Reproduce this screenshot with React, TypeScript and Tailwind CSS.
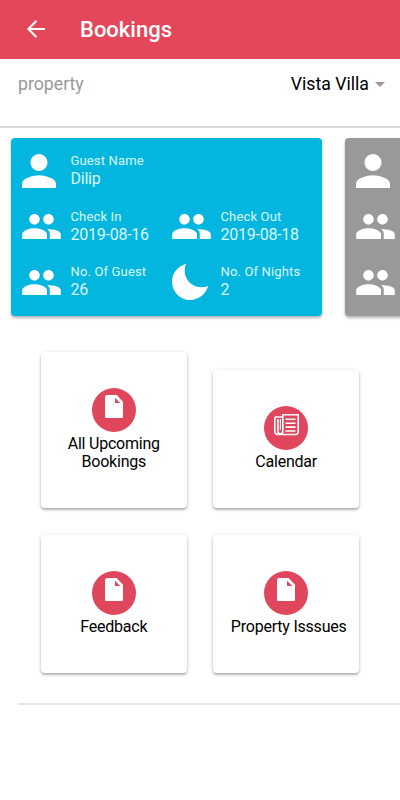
import React from "react";

interface Detail {
  label: string;
  value: string;
  icon: React.ReactNode;
}

interface Tile {
  id: number;
  title: string;
  icon: React.ReactNode;
  className: string;
  titleClassName: string;
}

const PersonIcon: React.FC = () => (
  <svg viewBox="64 64 384 384" className="w-[34px] h-[34px]" fill="currentColor">
    <path d="M256 256c52.805 0 96-43.201 96-96s-43.195-96-96-96-96 43.201-96 96 43.195 96 96 96zm0 48c-63.598 0-192 32.402-192 96v48h384v-48c0-63.598-128.402-96-192-96z" />
  </svg>
);

const PeopleIcon: React.FC = () => (
  <svg viewBox="32 110 448 290" className="w-[39px] h-[25px]" fill="currentColor">
    <path d="M337.454 232c33.599 0 61.092-27.002 61.092-61 0-33.997-27.493-61-61.092-61s-61.09 27.003-61.09 61c0 33.998 27.491 61 61.09 61zm-162.908 0c33.599 0 61.09-27.002 61.09-61 0-33.997-27.491-61-61.09-61s-61.092 27.003-61.092 61c0 33.998 27.493 61 61.092 61zm0 44C126.688 276 32 298.998 32 346v54h288v-54c0-47.002-97.599-70-145.454-70zm162.908 11.003c-6.105 0-10.325 0-17.454.997 23.426 17.002 32 28 32 58v54h128v-54c0-47.002-94.688-58.997-142.546-58.997z" />
  </svg>
);

const MoonIcon: React.FC = () => (
  <svg viewBox="51 51 410 410" className="w-9 h-9" fill="currentColor">
    <path d="M195 125c0-26.3 5.3-51.3 14.9-74.1C118.7 73 51 155.1 51 253c0 114.8 93.2 208 208 208 97.9 0 180-67.7 202.1-158.9-22.8 9.6-47.9 14.9-74.1 14.9-106 0-192-86-192-192z" />
  </svg>
);

const DocumentIcon: React.FC = () => (
  <svg viewBox="0 0 18 23.5" className="w-[18px] h-[23.5px]" fill="currentColor" fillRule="evenodd">
    <path d="M2.2 0H11.7L18 6.8V21.3a2.2 2.2 0 0 1-2.2 2.2H2.2A2.2 2.2 0 0 1 0 21.3V2.2A2.2 2.2 0 0 1 2.2 0zM10 2.7V8h5.3z" />
  </svg>
);

const NewspaperIcon: React.FC = () => (
  <svg viewBox="0 0 25 22" className="w-[25px] h-[22px] mt-[1.5px]" fill="none" stroke="currentColor" strokeWidth="1.6">
    <path d="M8.8 3H2.2A1.4 1.4 0 0 0 .8 4.4V17.3a3.2 3.2 0 0 0 3.2 3.2H21.8a2.4 2.4 0 0 0 2.4-2.4V.8H8.8V17.3a2.5 2.5 0 0 1-2.5 2.5A2.5 2.5 0 0 1 3.9 17.3V5.2" />
    <path d="M6.4 5V15.8" strokeWidth="1.2" />
    <path d="M11.5 5.3H21.5M11.5 9.2H21.5M11.5 13.1H21.5M11.5 17H21.5" />
  </svg>
);

const details: Detail[] = [
  { label: "Check In", value: "2019-08-16", icon: <PeopleIcon /> },
  { label: "Check Out", value: "2019-08-18", icon: <PeopleIcon /> },
  { label: "No. Of Guest", value: "26", icon: <PeopleIcon /> },
  { label: "No. Of Nights", value: "2", icon: <MoonIcon /> },
];

const tiles: Tile[] = [
  {
    id: 1,
    title: "All Upcoming Bookings",
    icon: <DocumentIcon />,
    className: "h-[156.5px]",
    titleClassName: "px-4",
  },
  {
    id: 2,
    title: "Calendar",
    icon: <NewspaperIcon />,
    className: "h-[138.5px]",
    titleClassName: "px-4",
  },
  {
    id: 3,
    title: "Feedback",
    icon: <DocumentIcon />,
    className: "h-[138.5px]",
    titleClassName: "px-4",
  },
  {
    id: 4,
    title: "Property Isssues",
    icon: <DocumentIcon />,
    className: "h-[138.5px]",
    titleClassName: "whitespace-nowrap pl-[5px]",
  },
];

const DetailItem: React.FC<Detail> = ({ label, value, icon }) => (
  <div className="flex h-9">
    <div className="w-[48.5px] shrink-0 flex items-center">{icon}</div>
    <div className="-mt-[0.6px] text-[#dcf8ff] whitespace-nowrap">
      <p className="text-[13px] leading-[17px] tracking-[0.15px]">{label}</p>
      <p className="text-base leading-5 tracking-[-0.25px]">{value}</p>
    </div>
  </div>
);

const App: React.FC = () => {
  return (
    <div className="w-full h-[800px] overflow-hidden bg-white text-black font-['Roboto',sans-serif]">
      <header className="h-[59px] bg-[#e4475a] text-white flex items-center pl-[27px]">
        <svg viewBox="0 0 18 18" className="w-[18px] h-[18px] -mt-px" fill="none" stroke="currentColor" strokeWidth="2">
          <path d="M18 9H1.5M9.5 .8L1.4 9l8.1 8.2" />
        </svg>
        <h1 className="ml-[35px] text-[22px] font-medium">Bookings</h1>
      </header>

      <div className="h-[69px] border-b-2 border-[#d9d9d9] flex items-start justify-between pl-[18px] pr-[15px] pt-[13px]">
        <span className="text-[17.7px] leading-6 text-[#999]">property</span>
        <span className="flex items-center text-[17.7px] leading-6">
          Vista Villa
          <svg viewBox="0 0 10 5" className="w-2.5 h-[5px] ml-1.5" fill="#999">
            <path d="M0 0h10L5 5z" />
          </svg>
        </span>
      </div>

      <div className="flex gap-[22.5px] pl-[11px] pt-2.5">
        <section className="w-[311px] h-[178px] shrink-0 rounded bg-[#03b6e0] text-white pl-[11px] shadow-[0_2px_3px_rgba(0,0,0,0.3)]">
          <div className="pt-[15px]">
            <DetailItem label="Guest Name" value="Dilip" icon={<PersonIcon />} />
          </div>
          <div className="grid grid-cols-[150px_150px] gap-y-[19.5px] pt-[19.5px]">
            {details.map((detail) => (
              <DetailItem key={detail.label} {...detail} />
            ))}
          </div>
        </section>
        <section className="w-[311px] h-[178px] shrink-0 rounded bg-[#999] text-white pl-[11px] pt-4 shadow-[0_2px_3px_rgba(0,0,0,0.3)]">
          <PersonIcon />
          <div className="pt-[26px] flex flex-col gap-[31px]">
            <PeopleIcon />
            <PeopleIcon />
          </div>
        </section>
      </div>

      <div className="grid grid-cols-[146px_146px] gap-x-[26.4px] gap-y-[26.5px] items-end pl-[40.8px] pt-[35.8px]">
        {tiles.map((tile) => (
          <div
            key={tile.id}
            className={`${tile.className} rounded bg-white flex flex-col items-center pt-9 shadow-[0_1px_4px_rgba(0,0,0,0.18),0_2px_2px_rgba(0,0,0,0.2)]`}
          >
            <div className="w-[44.5px] h-[44.5px] shrink-0 rounded-full bg-[#e0475c] text-white flex justify-center pt-[7px]">
              {tile.icon}
            </div>
            <p className={`pt-[2.4px] text-base leading-[18px] tracking-[-0.22px] text-center ${tile.titleClassName}`}>
              {tile.title}
            </p>
          </div>
        ))}
      </div>

      <div className="ml-[18px] mt-[29.5px] border-t-2 border-[#e6e6e6]" />
    </div>
  );
};

export default App;
